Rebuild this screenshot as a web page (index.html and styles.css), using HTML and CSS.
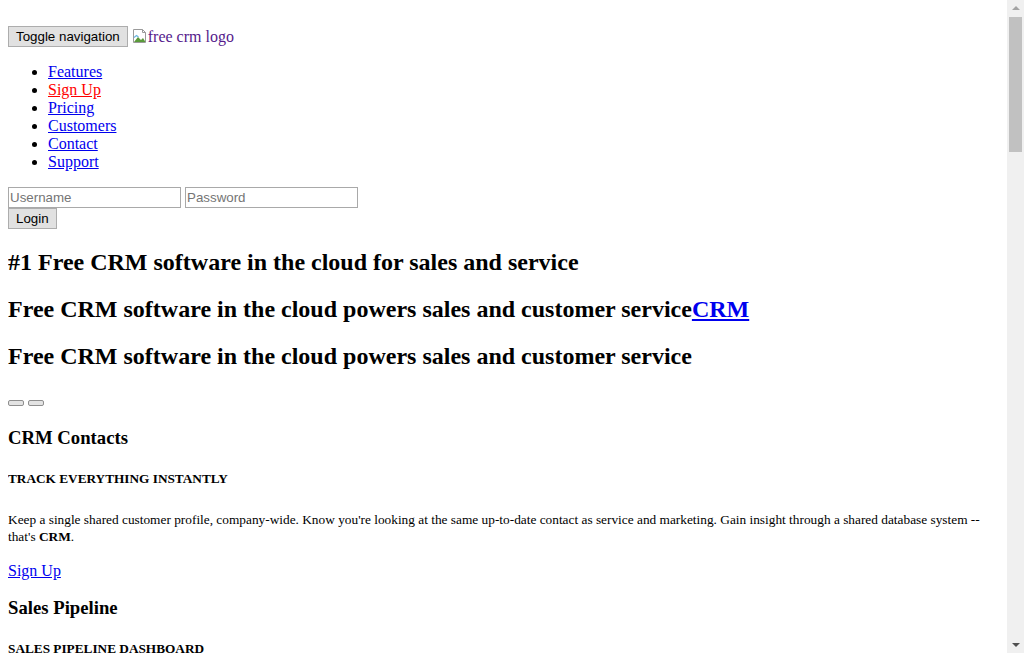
FILE: index.html
```html
<!DOCTYPE html>
<html>
<head>
<meta charset="utf-8">
<title>Free CRM</title>
<link rel="stylesheet" href="styles.css">
</head>
<body class="page">
<nav class="navbar">
  <div class="navbar-header">
    <button class="btn-native" type="button">Toggle navigation</button>
    <a class="brand" href="#"><span class="broken-img"><svg width="16" height="16" viewBox="0 0 16 16"><path d="M1.5 1.5h9l3 3v10h-12z" fill="#fff" stroke="#9a9a9a"/><path d="M10.5 1.5v3h3" fill="none" stroke="#9a9a9a"/><path d="M2 14l4-5 3 3 2-2 2.5 4z" fill="#5a9a3a"/><path d="M2 9.5l2.5-2 2 1.5" fill="none" stroke="#6cb6e0" stroke-width="1.2"/></svg></span>free crm logo</a>
  </div>
  <ul class="nav-list">
    <li><a href="#">Features</a></li>
    <li><a class="hot" href="#">Sign Up</a></li>
    <li><a href="#">Pricing</a></li>
    <li><a href="#">Customers</a></li>
    <li><a href="#">Contact</a></li>
    <li><a href="#">Support</a></li>
  </ul>
  <form class="login">
    <div class="login-row"><input class="field" type="text" placeholder="Username"> <input class="field" type="password" placeholder="Password"></div>
    <div class="login-row"><button class="btn-native" type="button">Login</button></div>
  </form>
</nav>
<h2 class="h2">#1 Free CRM software in the cloud for sales and service</h2>
<h2 class="h2">Free CRM software in the cloud powers sales and customer service<a href="#">CRM</a></h2>
<h2 class="h2">Free CRM software in the cloud powers sales and customer service</h2>
<div class="carousel-ctrl"><button class="dot" type="button"></button><button class="dot" type="button"></button></div>
<section>
  <h3 class="h3">CRM Contacts</h3>
  <h5 class="h5">TRACK EVERYTHING INSTANTLY</h5>
  <p class="desc">Keep a single shared customer profile, company-wide. Know you're looking at the same up-to-date contact as service and marketing. Gain insight through a shared database system -- that's <b>CRM</b>.</p>
  <a href="#">Sign Up</a>
</section>
<section>
  <h3 class="h3">Sales Pipeline</h3>
  <h5 class="h5">SALES PIPELINE DASHBOARD</h5>
  <p class="desc">Track every opportunity from lead to close. See your whole pipeline at a glance and forecast with confidence.</p>
  <a href="#">Sign Up</a>
</section>
<div class="scrollbar" aria-hidden="true">
  <div class="sb-arrow sb-up"></div>
  <div class="sb-thumb"></div>
  <div class="sb-fill"></div>
  <div class="sb-arrow sb-down"></div>
</div>
</body>
</html>
```
FILE: styles.css
```css
html { background: #fff; overflow: hidden; }
.page {
  margin: 8px 25px 8px 8px;
  font-family: "Liberation Serif", "Times New Roman", serif;
  font-size: 16px;
  color: #000;
}
a { color: #0000ee; }
.navbar { padding-top: 18px; }
.btn-native {
  font-family: "Liberation Sans", Arial, sans-serif;
  font-size: 13.333px;
  line-height: 15px;
  padding: 2px 7px;
  border: 1px solid #adadad;
  border-radius: 0;
  background: #e1e1e1;
  color: #000;
  margin: 0;
}
.navbar-header { height: 21px; line-height: 21px; }
.navbar-header .btn-native { vertical-align: top; }
.brand { color: #551a8b; text-decoration: none; }
.broken-img { display: inline-block; vertical-align: -2px; margin: 0; }
.nav-list { margin: 16px 0; padding-left: 40px; }
.nav-list li { line-height: 18px; }
.hot { color: #ff0000; }
.login-row { line-height: 21px; height: 21px; }
.field {
  font-family: "Liberation Sans", Arial, sans-serif;
  font-size: 13.333px;
  line-height: 15px;
  padding: 2px 1px;
  border: 1px solid #a9a9a9;
  width: 169px;
  margin: 0;
  vertical-align: top;
}
.field::placeholder { color: #757575; }
.login .btn-native { vertical-align: top; }
.h2 { font-size: 24px; margin: 19.92px 0; }
.carousel-ctrl { display: flex; gap: 4px; margin: 30px 0 21.72px; }
.dot {
  width: 16px;
  height: 6px;
  padding: 0;
  margin: 0;
  border: 1px solid #8f8f8f;
  border-radius: 2px;
  background: #e3e3e3;
}
.h3 { font-size: 18.72px; margin: 17.72px 0 18.72px; }
.h5 { font-size: 13.28px; margin: 21.18px 0 22.18px; }
.desc { font-size: 13.333px; line-height: 17px; margin: 24px 0 17px; }
.scrollbar {
  position: fixed;
  top: 0;
  right: 0;
  width: 17px;
  height: 100%;
  background: #f0f0f0;
  display: flex;
  flex-direction: column;
  align-items: center;
}
.sb-arrow { width: 0; height: 0; border-left: 4px solid transparent; border-right: 4px solid transparent; }
.sb-up { margin-top: 6px; border-bottom: 4px solid #a3a3a3; margin-bottom: 7px; }
.sb-thumb { width: 13px; height: 135px; background: #c1c1c1; margin-left: 2px; align-self: flex-start; }
.sb-fill { flex: 1; }
.sb-down { margin-bottom: 6px; border-top: 4px solid #505050; }
```
